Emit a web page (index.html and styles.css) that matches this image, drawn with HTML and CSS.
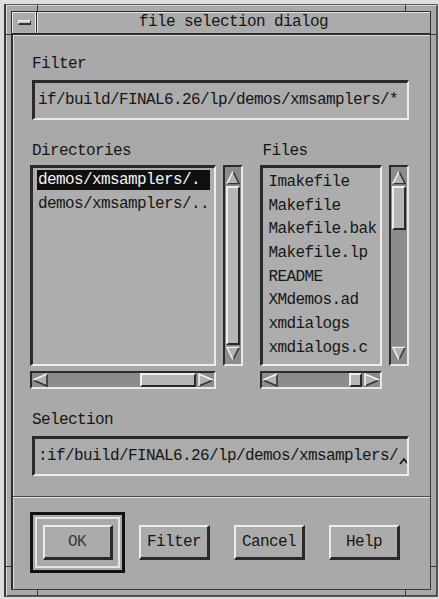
FILE: index.html
```html
<!DOCTYPE html>
<html>
<head>
<meta charset="utf-8">
<link rel="stylesheet" href="styles.css">
</head>
<body>
<div class="screen">
  <div class="frame">
    <span class="tick tick-tl-v"></span>
    <span class="tick tick-tl-h"></span>
    <span class="tick tick-tr-v"></span>
    <span class="tick tick-tr-h"></span>
    <span class="tick tick-bl-v"></span>
    <span class="tick tick-bl-h"></span>
    <span class="tick tick-br-v"></span>
    <span class="tick tick-br-h"></span>
    <div class="titlebar">
      <div class="menubtn"><span class="menubar"></span></div>
      <div class="title">file selection dialog</div>
    </div>
    <div class="body">
      <div class="work">
        <div class="label">Filter</div>
        <div class="field">if/build/FINAL6.26/lp/demos/xmsamplers/*</div>
        <div class="lists">
          <div class="col dircol">
            <div class="label">Directories</div>
            <div class="listrow">
              <div class="listbox dirbox">
                <div class="item selected">demos/xmsamplers/.</div>
                <div class="item">demos/xmsamplers/..</div>
              </div>
              <div class="vscroll">
                <svg class="varr" viewBox="0 0 16 16"><polygon points="8,1 15,15 1,15" fill="#b2b2b2"/><polyline points="8,1 15,15 1,15" stroke="#333" stroke-width="1.6" fill="none"/><polyline points="1,15 8,1" stroke="#f2f2f2" stroke-width="1.6" fill="none"/></svg>
                <div class="vslider full"></div>
                <svg class="varr" viewBox="0 0 16 16"><polygon points="1,1 15,1 8,15" fill="#b2b2b2"/><polyline points="15,1 8,15" stroke="#333" stroke-width="1.6" fill="none"/><polyline points="8,15 1,1 15,1" stroke="#f2f2f2" stroke-width="1.6" fill="none"/></svg>
              </div>
            </div>
            <div class="hscroll">
              <svg class="harr" viewBox="0 0 16 14" preserveAspectRatio="none"><polygon points="1,7 15,1 15,13" fill="#b2b2b2"/><polyline points="15,1 15,13 1,7" stroke="#333" stroke-width="1.6" fill="none"/><polyline points="1,7 15,1" stroke="#f2f2f2" stroke-width="1.6" fill="none"/></svg>
              <div class="htrough dirtrough"></div>
              <div class="hslider dirslider"></div>
              <svg class="harr" viewBox="0 0 16 14" preserveAspectRatio="none"><polygon points="1,1 15,7 1,13" fill="#b2b2b2"/><polyline points="15,7 1,13" stroke="#333" stroke-width="1.6" fill="none"/><polyline points="1,13 1,1 15,7" stroke="#f2f2f2" stroke-width="1.6" fill="none"/></svg>
            </div>
          </div>
          <div class="col filecol">
            <div class="label">Files</div>
            <div class="listrow">
              <div class="listbox filebox">
                <div class="item">Imakefile</div>
                <div class="item">Makefile</div>
                <div class="item">Makefile.bak</div>
                <div class="item">Makefile.lp</div>
                <div class="item">README</div>
                <div class="item">XMdemos.ad</div>
                <div class="item">xmdialogs</div>
                <div class="item">xmdialogs.c</div>
              </div>
              <div class="vscroll">
                <svg class="varr" viewBox="0 0 16 16"><polygon points="8,1 15,15 1,15" fill="#b2b2b2"/><polyline points="8,1 15,15 1,15" stroke="#333" stroke-width="1.6" fill="none"/><polyline points="1,15 8,1" stroke="#f2f2f2" stroke-width="1.6" fill="none"/></svg>
                <div class="vslider part"></div>
                <div class="vtrough"></div>
                <svg class="varr" viewBox="0 0 16 16"><polygon points="1,1 15,1 8,15" fill="#b2b2b2"/><polyline points="15,1 8,15" stroke="#333" stroke-width="1.6" fill="none"/><polyline points="8,15 1,1 15,1" stroke="#f2f2f2" stroke-width="1.6" fill="none"/></svg>
              </div>
            </div>
            <div class="hscroll">
              <svg class="harr" viewBox="0 0 16 14" preserveAspectRatio="none"><polygon points="1,7 15,1 15,13" fill="#b2b2b2"/><polyline points="15,1 15,13 1,7" stroke="#333" stroke-width="1.6" fill="none"/><polyline points="1,7 15,1" stroke="#f2f2f2" stroke-width="1.6" fill="none"/></svg>
              <div class="htrough filetrough"></div>
              <div class="hslider fileslider"></div>
              <svg class="harr" viewBox="0 0 16 14" preserveAspectRatio="none"><polygon points="1,1 15,7 1,13" fill="#b2b2b2"/><polyline points="15,7 1,13" stroke="#333" stroke-width="1.6" fill="none"/><polyline points="1,13 1,1 15,7" stroke="#f2f2f2" stroke-width="1.6" fill="none"/></svg>
            </div>
          </div>
        </div>
        <div class="label sel-label">Selection</div>
        <div class="field">:if/build/FINAL6.26/lp/demos/xmsamplers/<svg class="caret" viewBox="0 0 10 8"><polyline points="1,7 5,2 9,7" stroke="#111" stroke-width="1.6" fill="none"/></svg></div>
      </div>
      <div class="separator"></div>
      <div class="buttons">
        <div class="default-frame"><div class="btn">OK</div></div>
        <div class="btn btn-filter">Filter</div>
        <div class="btn btn-gap">Cancel</div>
        <div class="btn btn-gap">Help</div>
      </div>
    </div>
  </div>
</div>
</body>
</html>
```

FILE: styles.css
```css
* { box-sizing: border-box; }
html, body { margin: 0; padding: 0; }
body {
  width: 439px;
  height: 599px;
  overflow: hidden;
  background: #dedede;
  font-family: "Liberation Mono", "DejaVu Sans Mono", monospace;
  font-size: 16px;
  letter-spacing: -0.6px;
  color: #161616;
}
.screen { padding: 4px 1px 2px 4px; }
.frame {
  position: relative;
  width: 434px;
  height: 593px;
  background: #a9a9a9;
  border: 1px solid #5a5a5a;
  border-left: 2px solid #3a3a3a;
  padding: 6px 6px 6px 5px;
  display: flex;
  flex-direction: column;
  box-shadow: inset 1px 1px 0 #d6d6d6, inset -1px -1px 0 #4a4a4a;
}
.tick { position: absolute; background: #3c3c3c; }
.tick-tl-v { left: 31px; top: 0; width: 1px; height: 6px; }
.tick-tl-h { left: 0; top: 29px; width: 6px; height: 1px; }
.tick-tr-v { right: 31px; top: 0; width: 1px; height: 6px; }
.tick-tr-h { right: 0; top: 29px; width: 6px; height: 1px; }
.tick-bl-v { left: 31px; bottom: 0; width: 1px; height: 6px; }
.tick-bl-h { left: 0; bottom: 29px; width: 6px; height: 1px; }
.tick-br-v { right: 31px; bottom: 0; width: 1px; height: 6px; }
.tick-br-h { right: 0; bottom: 29px; width: 6px; height: 1px; }

.titlebar {
  display: flex;
  height: 24px;
  background: #ababab;
  border: 1px solid #2e2e2e;
  border-bottom-width: 2px;
}
.menubtn {
  width: 25px;
  display: flex;
  align-items: center;
  justify-content: center;
  border-right: 1px solid #2e2e2e;
  box-shadow: inset 1px 1px 0 #e6e6e6, inset -1px 0 0 #e6e6e6;
}
.menubar {
  width: 13px;
  height: 5px;
  background: #cfcfcf;
  border-top: 1px solid #f0f0f0;
  border-left: 1px solid #f0f0f0;
  border-bottom: 2px solid #333;
  border-right: 1px solid #333;
}
.title {
  flex: 1;
  text-align: center;
  line-height: 21px;
  box-shadow: inset 1px 1px 0 #e2e2e2;
}

.body {
  flex: 1;
  display: flex;
  flex-direction: column;
  background: #a9a9a9;
  border-left: 2px solid #2e2e2e;
  border-right: 1px solid #3a3a3a;
  border-bottom: 1px solid #3a3a3a;
  box-shadow: inset 1px 1px 0 #dcdcdc;
}
.work {
  display: flex;
  flex-direction: column;
  padding: 20px 21px 20px 17px;
}
.label {
  height: 18px;
  line-height: 18px;
  padding-left: 2px;
}
.sel-label { margin-top: 22px; }
.field {
  margin: 7px 0 0 2px;
  height: 40px;
  line-height: 35px;
  padding-left: 3px;
  white-space: nowrap;
  overflow: hidden;
  background: #acacac;
  border-style: solid;
  border-width: 3px 2px 2px 3px;
  border-color: #2a2a2a #ececec #ececec #2a2a2a;
}
.caret {
  width: 10px;
  height: 8px;
  vertical-align: -5px;
  margin-left: 1px;
}
.lists {
  display: flex;
  margin-top: 22px;
}
.dircol { width: 214px; }
.filecol { width: 149px; margin-left: 17px; }
.listrow {
  display: flex;
  margin-top: 5px;
  height: 201px;
}
.listbox {
  background: #adadad;
  border-style: solid;
  border-width: 3px 2px 2px 3px;
  border-color: #2a2a2a #ececec #ececec #2a2a2a;
  padding: 2px 4px 0 4px;
}
.dirbox { width: 186px; }
.filebox { width: 122px; }
.item {
  height: 20px;
  line-height: 20px;
  margin-bottom: 3.7px;
  padding-left: 1px;
  white-space: nowrap;
}
.filebox .item:first-child { margin-top: 2px; }
.item.selected {
  background: #101010;
  color: #f4f4f4;
}
.vscroll {
  width: 20px;
  margin-left: auto;
  display: flex;
  flex-direction: column;
  padding: 2px 1px;
  background: #8c8c8c;
  border-style: solid;
  border-width: 2px;
  border-color: #2a2a2a #e8e8e8 #e8e8e8 #2a2a2a;
}
.varr { width: 14px; height: 17px; display: block; flex: none; }
.vslider {
  background: #b6b6b6;
  border-style: solid;
  border-width: 2px;
  border-color: #eeeeee #2a2a2a #2a2a2a #eeeeee;
}
.vslider.full { flex: 1; }
.vslider.part { height: 44px; }
.vtrough { flex: 1; }
.hscroll {
  margin-top: 5px;
  height: 18px;
  display: flex;
  background: #8c8c8c;
  border-style: solid;
  border-width: 2px;
  border-color: #2a2a2a #e8e8e8 #e8e8e8 #2a2a2a;
}
.dircol .hscroll { width: 186px; }
.filecol .hscroll { width: 122px; }
.harr { width: 16px; height: 14px; display: block; flex: none; }
.htrough { flex: none; }
.dirtrough { width: 92px; }
.filetrough { width: 71px; }
.hslider {
  background: #b6b6b6;
  border-style: solid;
  border-width: 2px;
  border-color: #eeeeee #2a2a2a #2a2a2a #eeeeee;
  margin-right: 2px;
}
.dirslider { width: 56px; }
.fileslider { width: 13px; }

.separator {
  height: 2px;
  border-top: 1px solid #4a4a4a;
  border-bottom: 1px solid #e6e6e6;
}
.buttons {
  display: flex;
  align-items: center;
  padding: 14px 0 0 17px;
}
.default-frame {
  width: 95px;
  height: 61px;
  border: 3px solid #111;
  display: flex;
  align-items: center;
  justify-content: center;
  box-shadow: inset 0 0 0 2px #a9a9a9, inset 0 0 0 4px #e4e4e4;
}
.btn {
  width: 71px;
  height: 35px;
  line-height: 30px;
  text-align: center;
  background: #ababab;
  border-style: solid;
  border-width: 2px 3px 3px 2px;
  border-color: #ececec #2a2a2a #2a2a2a #ececec;
}
.default-frame .btn { width: 70px; color: #3a3a3a; }
.btn-filter { margin-left: 14px; }
.btn-gap { margin-left: 24px; }
```
